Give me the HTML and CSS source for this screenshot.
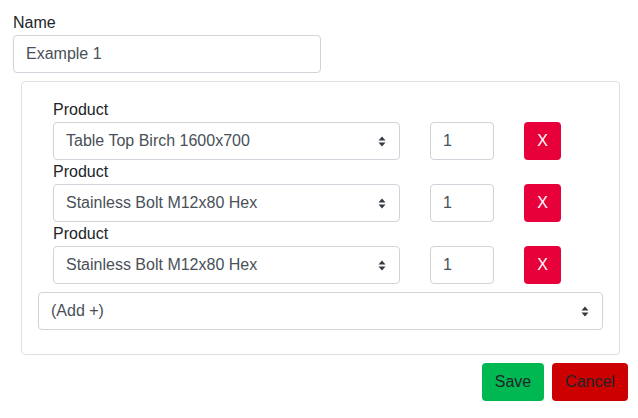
FILE: index.html
```html
<!DOCTYPE html>
<html>
<head>
<meta charset="utf-8">
<link rel="stylesheet" href="styles.css">
</head>
<body>
<div class="page">
  <label class="label">Name</label>
  <div class="input name-input">Example 1</div>
  <div class="box">
    <div class="item">
      <label class="label">Product</label>
      <div class="row">
        <div class="input select product-select"><span>Table Top Birch 1600x700</span><svg class="caret" width="8" height="11" viewBox="0 0 8 11"><path d="M4 0.5 L7.5 4.5 H0.5 Z M4 10.5 L7.5 6.5 H0.5 Z" fill="#343a40"/></svg></div>
        <div class="input qty">1</div>
        <button class="btn btn-x">X</button>
      </div>
    </div>
    <div class="item">
      <label class="label">Product</label>
      <div class="row">
        <div class="input select product-select"><span>Stainless Bolt M12x80 Hex</span><svg class="caret" width="8" height="11" viewBox="0 0 8 11"><path d="M4 0.5 L7.5 4.5 H0.5 Z M4 10.5 L7.5 6.5 H0.5 Z" fill="#343a40"/></svg></div>
        <div class="input qty">1</div>
        <button class="btn btn-x">X</button>
      </div>
    </div>
    <div class="item">
      <label class="label">Product</label>
      <div class="row">
        <div class="input select product-select"><span>Stainless Bolt M12x80 Hex</span><svg class="caret" width="8" height="11" viewBox="0 0 8 11"><path d="M4 0.5 L7.5 4.5 H0.5 Z M4 10.5 L7.5 6.5 H0.5 Z" fill="#343a40"/></svg></div>
        <div class="input qty">1</div>
        <button class="btn btn-x">X</button>
      </div>
    </div>
    <div class="input select add-select"><span>(Add +)</span><svg class="caret" width="8" height="11" viewBox="0 0 8 11"><path d="M4 0.5 L7.5 4.5 H0.5 Z M4 10.5 L7.5 6.5 H0.5 Z" fill="#343a40"/></svg></div>
  </div>
  <div class="actions">
    <button class="btn btn-save">Save</button>
    <button class="btn btn-cancel">Cancel</button>
  </div>
</div>
</body>
</html>
```
FILE: styles.css
```css
* { box-sizing: border-box; }
html, body { margin: 0; padding: 0; background: #fff; }
body {
  font-family: "Liberation Sans", Arial, sans-serif;
  font-size: 16px;
  color: #212529;
}
.page {
  padding: 11px 10px 0 13px;
}
.label {
  display: block;
  line-height: 24px;
  margin-bottom: 0;
  color: #212529;
}
.input {
  height: 38px;
  border: 1px solid #ced4da;
  border-radius: 4px;
  padding: 0 12px;
  display: flex;
  align-items: center;
  color: #495057;
  background: #fff;
  line-height: 24px;
}
.name-input { width: 308px; }
.box {
  margin: 8px 8px 0 8px;
  border: 1px solid #dfdfdf;
  border-radius: 4px;
  padding: 16px 16px 16px 16px;
}
.item { margin-left: 15px; }
.row {
  display: flex;
  align-items: center;
}
.select {
  justify-content: space-between;
  padding-right: 13px;
}
.caret { display: block; flex: none; }
.product-select { width: 347px; }
.qty { width: 64px; margin-left: 30px; }
.btn {
  height: 38px;
  border: none;
  border-radius: 4px;
  font-family: "Liberation Sans", Arial, sans-serif;
  font-size: 16px;
  padding: 0 12px;
  cursor: pointer;
}
.btn-x {
  width: 37px;
  padding: 0;
  margin-left: 30px;
  background: #e8003a;
  color: #fff;
}
.add-select {
  margin-top: 8px;
  margin-bottom: 8px;
}
.actions {
  display: flex;
  justify-content: flex-end;
  gap: 8px;
  margin-top: 8px;
}
.btn-save { background: #00b851; color: #212529; width: 62px; }
.btn-cancel { background: #cc0000; color: #212529; width: 76px; }
```
